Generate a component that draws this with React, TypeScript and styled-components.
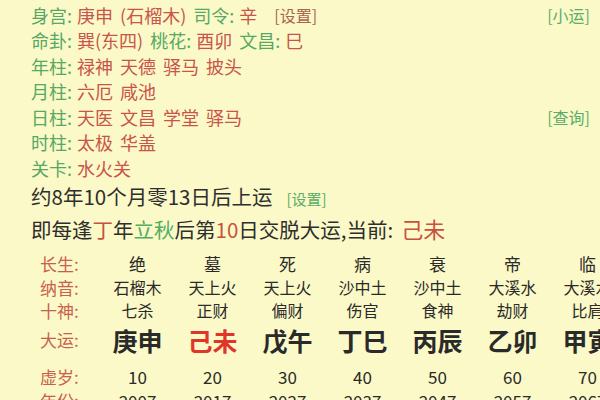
import styled, { createGlobalStyle } from "styled-components";

const GlobalStyle = createGlobalStyle`
  html, body {
    margin: 0;
    padding: 0;
    background: #fbf9c7;
  }
  body {
    font-family: "Noto Sans CJK SC", "Noto Sans", sans-serif;
    overflow: hidden;
  }
`;

const Page = styled.div`
  width: 600px;
  height: 400px;
  overflow: hidden;
  background: #fbf9c7;
  box-sizing: border-box;
`;

const InfoBlock = styled.div`
  padding: 2px 10px 0 31px;
`;

const InfoLine = styled.div`
  display: flex;
  align-items: center;
  height: 25.5px;
  font-size: 18px;
  white-space: nowrap;
`;

const Label = styled.span`
  color: #55a865;
  margin-right: 5px;
`;

const Value = styled.span`
  color: #c8544c;
  margin-right: 7px;
  word-spacing: 3px;
`;

const Action = styled.span<{ $tone?: "green" | "brown" }>`
  font-size: 16px;
  color: ${(p) => (p.$tone === "brown" ? "#a8644f" : "#5aad6a")};
  margin-left: ${(p) => (p.$tone === "brown" ? "10px" : "auto")};
`;

const Sentence = styled.div<{ $top: number }>`
  display: flex;
  align-items: baseline;
  padding-left: 31px;
  margin-top: ${(p) => p.$top}px;
  height: 27px;
  font-size: 20.5px;
  color: #2e2e2e;
  white-space: nowrap;
`;

const Hl = styled.span<{ $c: "red" | "green"; $big?: boolean }>`
  color: ${(p) => (p.$c === "red" ? "#c9503f" : "#4fae62")};
  font-size: ${(p) => (p.$big ? "22px" : "inherit")};
  margin-left: ${(p) => (p.$big ? "8px" : "0")};
`;

const SmallSet = styled.span`
  font-size: 15px;
  color: #5aad6a;
  margin-left: 14px;
`;

const Table = styled.div`
  margin-top: 12px;
  padding-left: 40px;
`;

const Row = styled.div<{ $h: number; $gap?: number; $size: number; $bold?: boolean }>`
  display: grid;
  grid-template-columns: 60px repeat(7, 75px);
  align-items: center;
  height: ${(p) => p.$h}px;
  margin-top: ${(p) => p.$gap ?? 0}px;
  font-size: ${(p) => p.$size}px;
  font-weight: ${(p) => (p.$bold ? 600 : 400)};
  color: #2a2a2a;
  white-space: nowrap;
`;

const RowLabel = styled.span`
  font-size: 17px;
  font-weight: 400;
  color: #c9604f;
`;

const Cell = styled.span<{ $red?: boolean }>`
  text-align: center;
  color: ${(p) => (p.$red ? "#e0352b" : "inherit")};
`;

const info = [
  {
    parts: [
      ["l", "身宫:"],
      ["v", "庚申 (石榴木)"],
      ["l", "司令:"],
      ["v", "辛"],
    ],
    set: true,
    right: "[小运]",
  },
  {
    parts: [
      ["l", "命卦:"],
      ["v", "巽(东四)"],
      ["l", "桃花:"],
      ["v", "酉卯"],
      ["l", "文昌:"],
      ["v", "巳"],
    ],
  },
  { parts: [["l", "年柱:"], ["v", "禄神 天德 驿马 披头"]] },
  { parts: [["l", "月柱:"], ["v", "六厄 咸池"]] },
  { parts: [["l", "日柱:"], ["v", "天医 文昌 学堂 驿马"]], right: "[查询]" },
  { parts: [["l", "时柱:"], ["v", "太极 华盖"]] },
  { parts: [["l", "关卡:"], ["v", "水火关"]] },
];

const rows = [
  { label: "长生:", h: 24, size: 17, cells: ["绝", "墓", "死", "病", "衰", "帝", "临"] },
  { label: "纳音:", h: 23, size: 16, cells: ["石榴木", "天上火", "天上火", "沙中土", "沙中土", "大溪水", "大溪水"] },
  { label: "十神:", h: 24, size: 16, cells: ["七杀", "正财", "偏财", "伤官", "食神", "劫财", "比肩"] },
  { label: "大运:", h: 33, size: 25, bold: true, cells: ["庚申", "己未", "戊午", "丁巳", "丙辰", "乙卯", "甲寅"], red: 1 },
  { label: "虚岁:", h: 24, gap: 9, size: 17, cells: ["10", "20", "30", "40", "50", "60", "70"] },
  { label: "年份:", h: 24, size: 17, cells: ["2007", "2017", "2027", "2037", "2047", "2057", "2067"] },
];

export default function App() {
  return (
    <Page>
      <GlobalStyle />
      <InfoBlock>
        {info.map((line, i) => (
          <InfoLine key={i}>
            {line.parts.map(([k, t], j) =>
              k === "l" ? <Label key={j}>{t}</Label> : <Value key={j}>{t}</Value>
            )}
            {line.set && <Action $tone="brown">[设置]</Action>}
            {line.right && <Action>{line.right}</Action>}
          </InfoLine>
        ))}
      </InfoBlock>
      <Sentence $top={0}>
        约8年10个月零13日后上运<SmallSet>[设置]</SmallSet>
      </Sentence>
      <Sentence $top={4}>
        即每逢<Hl $c="red">丁</Hl>年<Hl $c="green">立秋</Hl>后第<Hl $c="red">10</Hl>日交脱大运,当前:
        <Hl $c="red" $big>己未</Hl>
      </Sentence>
      <Table>
        {rows.map((r) => (
          <Row key={r.label} $h={r.h} $gap={r.gap} $size={r.size} $bold={r.bold}>
            <RowLabel>{r.label}</RowLabel>
            {r.cells.map((c, i) => (
              <Cell key={i} $red={r.red === i}>
                {c}
              </Cell>
            ))}
          </Row>
        ))}
      </Table>
    </Page>
  );
}
